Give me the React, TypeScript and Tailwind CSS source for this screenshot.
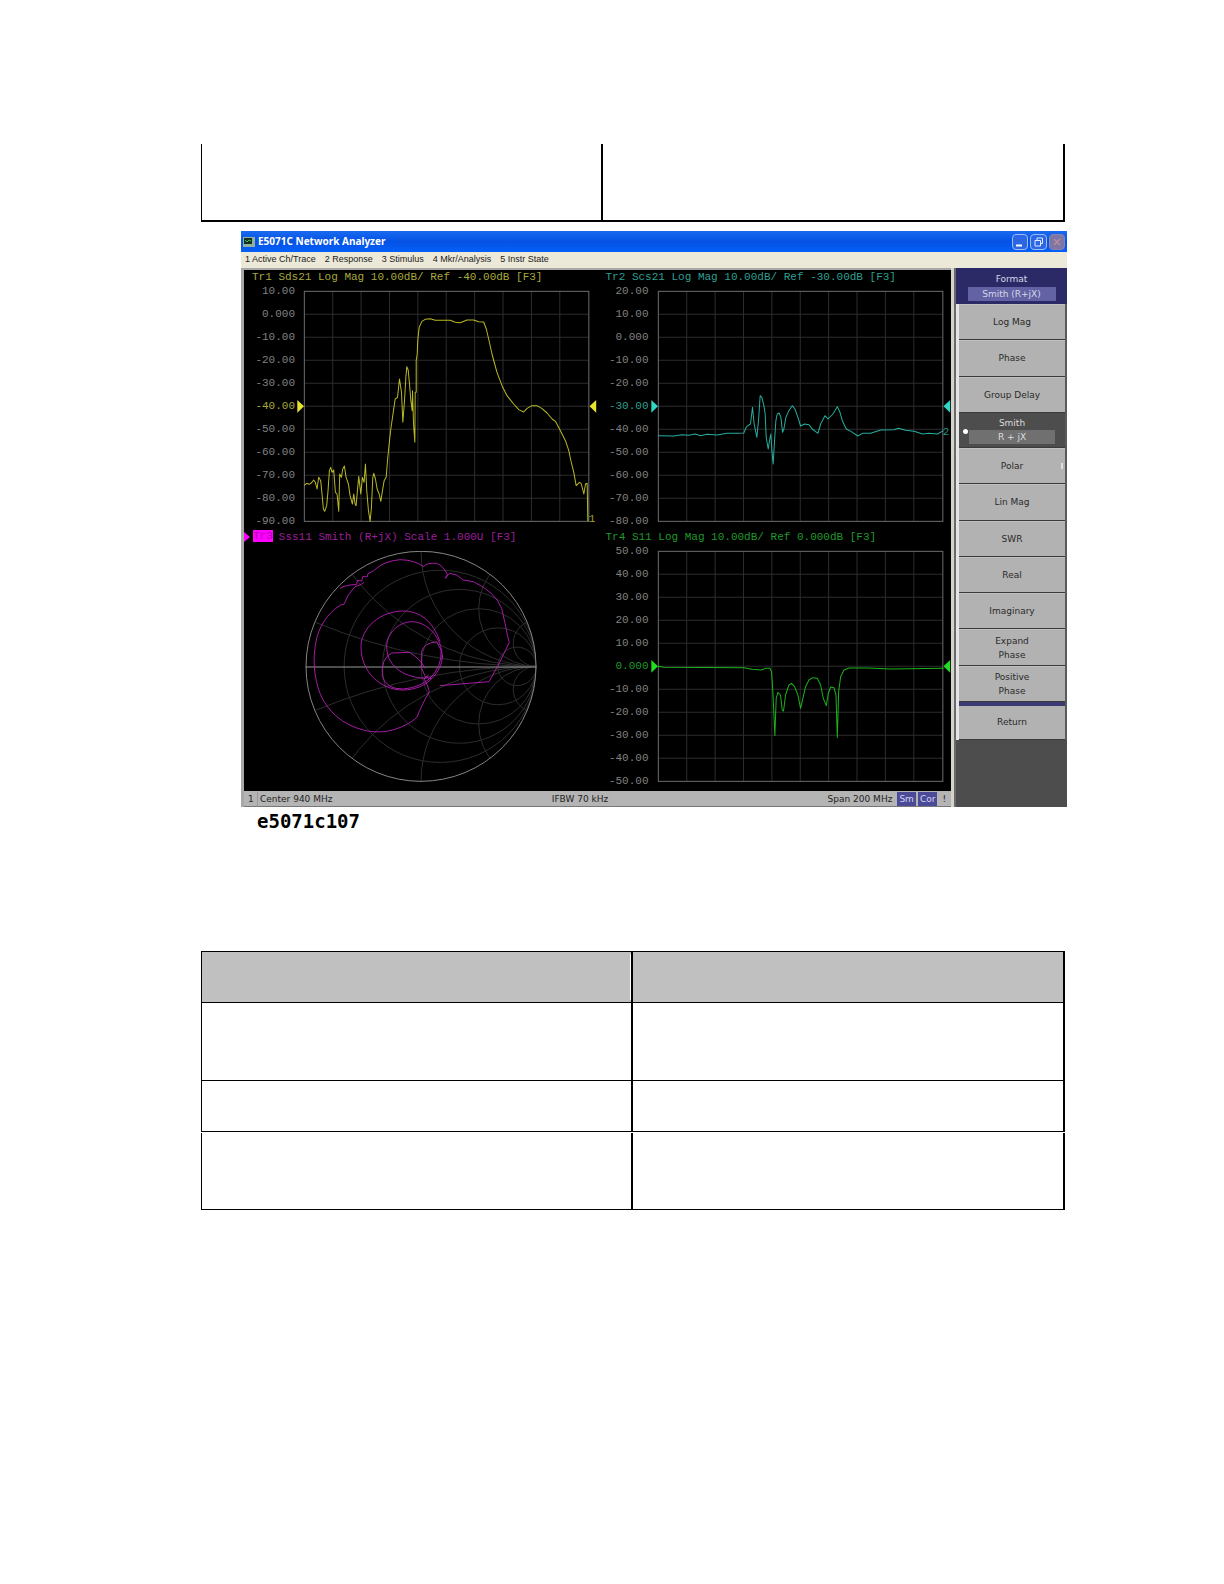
import React from 'react';
import clsx from 'clsx';

interface Trace {
  title: string;
  start: number;
  refIndex: number;
  color: string;
  textClass: string;
  origin: [number, number];
  points: string;
  marker?: { label: string; y: number };
}

const traces: Record<'tr1' | 'tr2' | 'tr4', Trace> = {
  tr1: {
    title: 'Tr1 Sds21 Log Mag 10.00dB/ Ref -40.00dB [F3]',
    start: 10,
    refIndex: 5,
    color: '#e6e62e',
    textClass: 'text-[#a9a93c]',
    origin: [192, 81],
    marker: { label: '1', y: 693 },
    points:
      '193,664 200,658 207,661 214,657 221,648 226,655 231,675 236,640 242,650 246,690 250,735 254,742 260,725 264,680 268,620 272,610 276,625 281,618 286,685 291,690 296,742 299,630 304,640 308,615 313,606 318,640 325,660 330,695 337,720 341,690 345,720 348,725 352,680 356,637 362,690 367,640 372,655 376,600 380,680 385,740 390,772 394,730 398,640 401,628 406,645 411,675 417,690 422,712 427,680 432,650 438,640 443,580 447,540 452,495 460,440 465,405 472,400 478,345 484,385 488,475 493,410 497,340 500,308 504,318 508,360 512,410 516,440 517,380 520,480 524,535 525,385 528,385 528,290 531,270 533,225 537,190 545,172 555,166 570,164 585,169 630,169 645,175 660,176 680,168 700,168 715,173 730,174 738,195 745,225 755,270 763,300 770,325 785,365 800,395 820,420 835,437 850,444 860,433 875,425 890,425 905,434 920,447 935,465 945,472 960,500 975,530 985,560 990,585 1000,625 1007,665 1017,655 1022,658 1030,690 1035,660 1040,658 1042,772',
  },
  tr2: {
    title: 'Tr2 Scs21 Log Mag 10.00dB/ Ref -30.00dB [F3]',
    start: 20,
    refIndex: 5,
    color: '#2fd8c4',
    textClass: 'text-[#2f9f90]',
    origin: [173, 81],
    marker: { label: '2', y: 432 },
    points:
      '174,515 220,516 245,512 265,514 285,510 300,515 320,511 350,513 380,508 410,508 430,507 438,488 450,480 456,430 461,480 469,520 474,470 479,395 484,400 490,425 494,450 497,520 503,555 507,530 511,510 514,560 518,600 522,530 526,470 530,450 536,447 541,460 546,505 550,495 556,460 565,440 575,425 583,435 592,460 600,486 612,480 625,482 635,495 652,508 660,480 673,455 682,465 697,450 710,428 718,445 725,470 737,495 752,503 771,516 785,508 810,508 840,498 880,497 893,493 915,499 940,502 965,510 985,508 1010,510 1028,500',
  },
  tr4: {
    title: 'Tr4 S11 Log Mag 10.00dB/ Ref 0.000dB [F3]',
    start: 50,
    refIndex: 5,
    color: '#22dd22',
    textClass: 'text-[#1f9a2b]',
    origin: [173, 78],
    points:
      '174,424 190,427 430,428 455,433 482,435 495,430 508,430 513,440 517,500 523,632 527,520 532,502 540,510 545,555 549,558 555,510 565,480 573,475 582,485 592,510 600,550 608,515 615,485 625,465 637,458 650,460 660,480 668,520 677,542 683,505 690,486 700,488 706,510 710,638 714,500 720,455 730,435 745,429 800,429 870,432 1028,430',
  },
};

const menuItems = ['1 Active Ch/Trace', '2 Response', '3 Stimulus', '4 Mkr/Analysis', '5 Instr State'];

const softkeys = [
  { label: 'Log Mag' },
  { label: 'Phase' },
  { label: 'Group Delay' },
  { label: 'Smith', value: 'R + jX', active: true },
  { label: 'Polar', arrow: true },
  { label: 'Lin Mag' },
  { label: 'SWR' },
  { label: 'Real' },
  { label: 'Imaginary' },
  { label: 'Expand Phase', wrap: true },
  { label: 'Positive Phase', wrap: true },
];

const divisions = Array.from({ length: 11 }, (_, i) => i);

function axisLabel(value: number) {
  return value === 0 ? '0.000' : value.toFixed(2);
}

function RectPlot({ trace }: { trace: Trace }) {
  const [ox, oy] = trace.origin;
  const refY = 1 + trace.refIndex * 69;

  return (
    <section className="pr-2">
      <h3 className={clsx('h-[21px] whitespace-pre pl-2 text-[11px] leading-[14px]', trace.textClass)}>
        {trace.title}
      </h3>
      <div className="flex">
        <div className="-my-[11px] w-[51px] shrink-0 text-right text-[11px] leading-[23px] text-[#808080]">
          {divisions.map((i) => (
            <div key={i} className={clsx(i === trace.refIndex && trace.textClass)}>
              {axisLabel(trace.start - i * 10)}
            </div>
          ))}
        </div>
        <svg
          viewBox="0 0 855 693"
          preserveAspectRatio="none"
          className="ml-[9px] h-[231px] min-w-0 flex-1 overflow-visible"
          fill="none"
        >
          <g stroke="#2d2d2d" strokeWidth="3">
            {divisions.slice(1, 10).map((i) => (
              <path key={i} d={`M${1 + i * 85} 1V691M1 ${1 + i * 69}H853`} />
            ))}
          </g>
          <rect x="1" y="1" width="852" height="690" stroke="#6e6e6e" strokeWidth="3" />
          <polyline
            points={trace.points}
            transform={`translate(${-ox} ${-oy})`}
            stroke={trace.color}
            strokeOpacity="0.8"
            strokeWidth="3"
            strokeLinejoin="round"
          />
          <path d={`M-20 ${refY - 19}L0 ${refY}L-20 ${refY + 19}Z`} fill={trace.color} />
          <path d={`M875 ${refY - 19}L855 ${refY}L875 ${refY + 19}Z`} fill={trace.color} />
          {trace.marker && (
            <text x="853" y={trace.marker.y} fill={trace.color} fillOpacity="0.7" fontSize="33">
              {trace.marker.label}
            </text>
          )}
        </svg>
      </div>
    </section>
  );
}

function SmithPlot() {
  const radius = 346;
  const cx = 543;
  const cy = 424;

  return (
    <section className="pr-2">
      <h3 className="flex h-[21px] items-start text-[11px] leading-[14px] text-[#9a1f9a]">
        <svg viewBox="0 0 6 10" className="mt-[2px] h-[10px] w-[6px] fill-[#f0f]">
          <path d="M0 0L6 5L0 10Z" />
        </svg>
        <span className="ml-[3px] h-3 bg-[#f0f] leading-[12px] text-[#b000b0]">Tr3</span>
        <span className="ml-[6px] whitespace-pre">Sss11 Smith (R+jX) Scale 1.000U [F3]</span>
      </h3>
      <svg viewBox="192 78 855 693" preserveAspectRatio="xMinYMin meet" className="ml-[60px] h-[231px]" fill="none">
        <defs>
          <clipPath id="smith-disc">
            <circle cx={cx} cy={cy} r={radius} />
          </clipPath>
        </defs>
        <g stroke="#2d2d2d" strokeWidth="3" clipPath="url(#smith-disc)">
          {[0.2, 0.5, 1, 2, 5].map((r) => (
            <circle key={r} cx={cx + (radius * r) / (1 + r)} cy={cy} r={radius / (1 + r)} />
          ))}
          {[0.2, 0.5, 1, 2, 5].map((x) => (
            <React.Fragment key={x}>
              <circle cx={cx + radius} cy={cy - radius / x} r={radius / x} />
              <circle cx={cx + radius} cy={cy + radius / x} r={radius / x} />
            </React.Fragment>
          ))}
        </g>
        <circle cx={cx} cy={cy} r={radius - 1} stroke="#858585" strokeWidth="3" />
        <path d="M197 426H889" stroke="#999" strokeWidth="3" />
        <g stroke="#c020c0" strokeOpacity="0.85" strokeWidth="3" strokeLinejoin="round">
          <path d="M300 190L312 184L330 180L350 178L352 166L365 168L368 155L382 155L384 146L400 138Q430 108 480 104Q525 105 550 125Q562 112 590 115Q610 122 622 148L616 160L628 145L650 150L670 165L700 170Q765 200 785 250Q797 300 803 335L808 352L775 420L747 470L600 482" />
          <path d="M372 172L360 180L345 185L325 210L312 238L302 240C260 265 235 310 228 350C218 400 221 455 240 505C262 560 310 600 370 615C395 622 430 622 450 617C485 608 510 595 530 578C540 555 550 530 568 500L562 480L552 462L566 450" />
          <path d="M600 350C580 290 540 258 490 258C420 258 363 310 363 365C363 440 420 495 490 495C560 495 608 440 607 390" />
          <path d="M607 400C607 335 560 290 515 290C470 292 440 330 440 365C440 415 480 458 560 460" />
          <path d="M575 462L556 455L545 430L545 380Q550 355 590 350L603 375Q608 425 565 465" />
          <path d="M555 430Q540 400 508 382L455 384Q422 400 427 455Q440 493 490 492Q545 488 580 450" />
        </g>
      </svg>
    </section>
  );
}

function TitleBar() {
  return (
    <header className="flex h-[21px] items-center bg-gradient-to-b from-[#1a6af0] via-[#0552e4] to-[#0560f8] px-[2px]">
      <svg viewBox="0 0 12 10" className="h-[10px] w-3">
        <rect width="12" height="10" fill="#8fb09a" />
        <rect x="1" y="1" width="8" height="6" fill="#12301c" />
        <path d="M2 3l2 2l2-2l2 1" stroke="#3fc060" fill="none" />
      </svg>
      <h2 className="ml-[3px] font-['Noto_Sans',sans-serif] text-[10px] font-bold text-white">
        E5071C Network Analyzer
      </h2>
      <div className="ml-auto flex gap-[2px]">
        <button aria-label="Minimize" className="h-4 w-4 rounded-sm border border-[#9dbcf5] bg-[#2c66e4]">
          <svg viewBox="0 0 14 14" className="h-full w-full">
            <path d="M3 10.5h6" stroke="#fff" strokeWidth="2" />
          </svg>
        </button>
        <button aria-label="Restore" className="h-4 w-[17px] rounded-sm border border-[#9dbcf5] bg-[#2c66e4]">
          <svg viewBox="0 0 14 14" className="h-full w-full" fill="none" stroke="#dfe9ff">
            <path d="M5.500 5V3H11V8.500H9.500M3.500 5.500H9V11H3.500Z" />
          </svg>
        </button>
        <button aria-label="Close" className="h-4 w-4 rounded-sm border border-[#8585b4] bg-[#7d75a4]">
          <svg viewBox="0 0 14 14" className="h-full w-full">
            <path d="M4 4l6 6M10 4l-6 6" stroke="#b98b9c" strokeWidth="1.500" />
          </svg>
        </button>
      </div>
    </header>
  );
}

function SoftkeyPanel() {
  return (
    <aside className="flex w-[111px] shrink-0 flex-col bg-[#4d4d4d] text-[9px] text-[#2a2a2a]">
      <div className="flex h-9 flex-col items-center justify-center gap-px bg-[#2b2a66] text-[#d8d8e8]">
        <div className="leading-[14px]">Format</div>
        <div className="w-[88px] bg-[#6262a4] text-center leading-[14px]">Smith (R+jX)</div>
      </div>
      <div className="flex h-[436px] flex-col border-l-[3px] border-r-2 border-l-[#e4e4e4] border-r-[#5a5a5a]">
        {softkeys.map((key) => (
          <button
            key={key.label}
            className={clsx(
              'relative flex min-h-0 flex-1 flex-col items-center justify-center border-b border-[#3a3a3a]',
              key.active ? 'bg-[#4d4d4d] text-[#dcdcdc]' : 'border-t border-t-[#c0c0c0] bg-[#b2b2b2]'
            )}
          >
            <span className={clsx('leading-[14px]', key.wrap && 'w-12')}>{key.label}</span>
            {key.value && <span className="w-[86px] bg-[#707070] leading-[14px]">{key.value}</span>}
            {key.active && <span className="absolute left-1 top-4 h-[5px] w-[5px] rounded-full bg-white" />}
            {key.arrow && <span className="absolute right-[2px] top-[14px] h-[6px] w-[2px] bg-[#e0e0e0]" />}
          </button>
        ))}
        <div className="h-1 bg-[#3a3970]" />
        <button className="h-[34px] border-b border-[#3a3a3a] bg-[#b2b2b2]">Return</button>
      </div>
    </aside>
  );
}

function StatusBar() {
  return (
    <footer className="flex h-4 items-center border-b border-[#777] bg-[#b4b4b4] px-1 text-[9px] leading-[14px] text-[#222]">
      <span className="w-[10px] border-r border-[#999]">1</span>
      <span className="ml-[2px]">Center 940 MHz</span>
      <span className="ml-auto">IFBW 70 kHz</span>
      <span className="ml-auto">Span 200 MHz</span>
      <span className="ml-[5px] bg-[#4a4a98] px-[2px] text-[#d4d4f0]">Sm</span>
      <span className="ml-[2px] bg-[#4a4a98] px-[2px] text-[#d4d4f0]">Cor</span>
      <span className="ml-1 px-px">!</span>
    </footer>
  );
}

function AnalyzerWindow() {
  return (
    <div className="font-['DejaVu_Sans',sans-serif]">
      <TitleBar />
      <nav className="flex h-4 items-center gap-[9px] bg-[#ece9d8] pl-1 font-['Liberation_Sans',sans-serif] text-[9px] text-[#222]">
        {menuItems.map((item) => (
          <button key={item}>{item}</button>
        ))}
      </nav>
      <div className="flex">
        <div className="min-w-0 flex-1 border-l-[3px] border-t-2 border-[#a8a8a8]">
          <div className="grid grid-cols-2 bg-black pb-px font-['Liberation_Mono',monospace] [&>section]:h-[260px]">
            <RectPlot trace={traces.tr1} />
            <RectPlot trace={traces.tr2} />
            <SmithPlot />
            <RectPlot trace={traces.tr4} />
          </div>
          <StatusBar />
        </div>
        <div className="w-[5px] border-r-2 border-[#6a6a6a] bg-[#d4d4cc]" />
        <SoftkeyPanel />
      </div>
    </div>
  );
}

export default function App() {
  return (
    <main className="min-h-screen bg-white pb-16 pl-[201px] pr-[159px] pt-36 text-black">
      <table className="w-full border-separate border-spacing-0">
        <tbody>
          <tr className="h-[78px]">
            <td className="w-[402px] border-b-2 border-l border-r-2 border-black" />
            <td className="border-b-2 border-r-2 border-black" />
          </tr>
        </tbody>
      </table>

      <figure className="-mr-[2px] ml-10 mt-[9px]">
        <AnalyzerWindow />
        <figcaption className="ml-4 mt-[3px] font-['DejaVu_Sans_Mono',monospace] text-[19px] font-bold leading-[22px]">
          e5071c107
        </figcaption>
      </figure>

      <table className="mt-[119px] w-full table-fixed border-separate border-spacing-0">
        <thead>
          <tr className="h-[52px] bg-[#c0c0c0]">
            <th className="border-y border-l border-r-2 border-black p-0">
              <div className="h-[46px] border-r border-white" />
            </th>
            <th className="border-y border-r-2 border-black" />
          </tr>
        </thead>
        <tbody>
          <tr className="h-[78px]">
            <td className="border-b border-l border-r-2 border-black" />
            <td className="border-b border-r-2 border-black" />
          </tr>
          <tr className="h-[51px]">
            <td className="border-b border-l border-r-2 border-black" />
            <td className="border-b border-r-2 border-black" />
          </tr>
        </tbody>
      </table>
      <table className="mt-px w-full table-fixed border-separate border-spacing-0">
        <tbody>
          <tr className="h-[77px]">
            <td className="border-b border-l border-r-2 border-black" />
            <td className="border-b border-r-2 border-black" />
          </tr>
        </tbody>
      </table>
    </main>
  );
}
